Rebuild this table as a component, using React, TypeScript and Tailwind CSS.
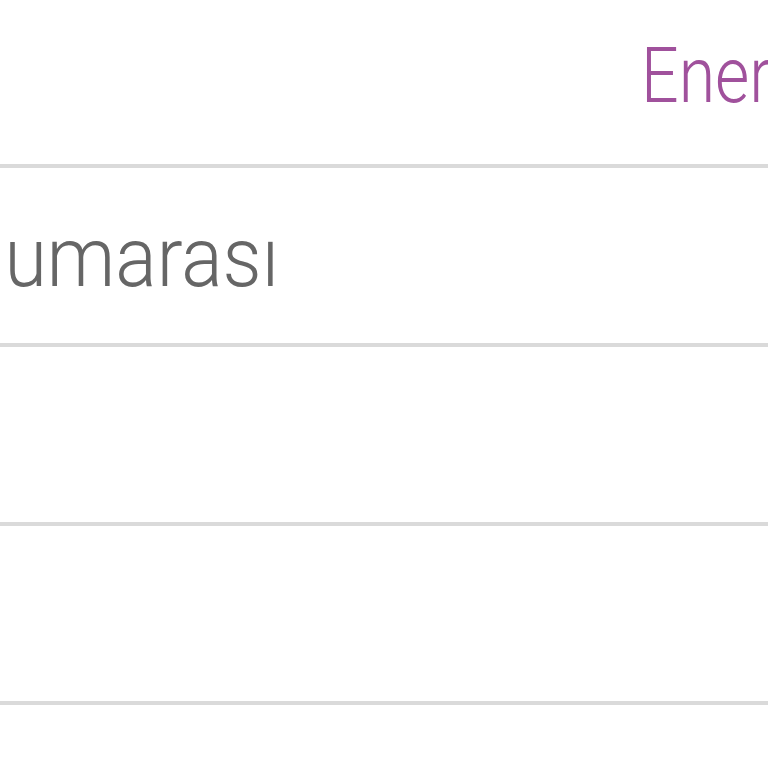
import React from "react";

export default function App() {
  const font = { fontFamily: "Roboto, 'Open Sans', sans-serif" };
  return (
    <div className="w-[768px] h-[768px] bg-white overflow-hidden" style={font}>
      <div className="h-[164px] pl-[641px] pt-[38px] overflow-hidden">
        <div className="origin-left scale-x-[0.86] text-[77px] leading-none font-light text-[#a0519c] whitespace-nowrap">
          Enerjisa
        </div>
      </div>
      <div className="h-[4px] bg-[#dadada]" />
      <div className="h-[175px] pt-[48px] overflow-hidden">
        <div className="ml-[-38px] origin-left scale-x-[0.93] text-[83px] leading-none font-light text-[#666666] whitespace-nowrap">
          numarası
        </div>
      </div>
      <div className="h-[4px] bg-[#dadada]" />
      <div className="h-[175px]" />
      <div className="h-[4px] bg-[#dadada]" />
      <div className="h-[175px]" />
      <div className="h-[4px] bg-[#dadada]" />
    </div>
  );
}
